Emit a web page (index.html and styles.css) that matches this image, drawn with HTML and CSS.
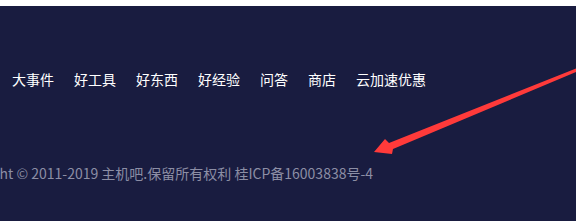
FILE: index.html
```html
<!DOCTYPE html>
<html lang="zh-CN">
<head>
<meta charset="utf-8">
<link rel="stylesheet" href="styles.css">
</head>
<body>
<div class="page">
  <nav class="nav">
    <a>大事件</a>
    <a>好工具</a>
    <a>好东西</a>
    <a>好经验</a>
    <a>问答</a>
    <a>商店</a>
    <a>云加速优惠</a>
  </nav>
  <p class="copy">Copyright © 2011-2019 主机吧.保留所有权利 桂ICP备16003838号-4</p>
  <svg class="arrow" width="576" height="221" viewBox="0 0 576 221">
    <polygon points="374,152 385,139 389,143 576,68.5 576,72 393,149 392,154" fill="#ff3a3a"/>
  </svg>
</div>
</body>
</html>
```
FILE: styles.css
```css
html, body {
  margin: 0;
  padding: 0;
  background: #ffffff;
}
body {
  padding-top: 6px;
  font-family: "Noto Sans CJK SC", "Noto Sans", sans-serif;
}
.page {
  position: relative;
  height: 215px;
  background: #191c40;
  overflow: hidden;
}
.nav {
  display: flex;
  gap: 20px;
  padding: 62px 0 0 12px;
  font-size: 14px;
  line-height: 22px;
}
.nav a {
  color: #ffffff;
}
.copy {
  margin: 72px 0 0 -51px;
  white-space: nowrap;
  font-size: 14px;
  line-height: 22px;
  color: #8c8ea5;
}
.arrow {
  position: absolute;
  left: 0;
  top: -6px;
}
```
